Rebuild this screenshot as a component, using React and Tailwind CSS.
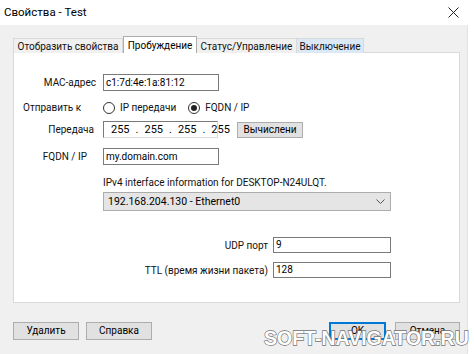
import React from "react";

function Radio({ checked }) {
  return (
    <span className="w-[12px] h-[12px] rounded-full border border-[#333] bg-white flex items-center justify-center shrink-0">
      {checked && <span className="w-[6px] h-[6px] rounded-full bg-[#222]" />}
    </span>
  );
}

function Input({ w, h = "h-[17px]", children }) {
  return (
    <div className={`${w} ${h} border border-[#7a7a7a] bg-white flex items-center pl-[2px] leading-none text-black whitespace-nowrap`}>
      {children}
    </div>
  );
}

export default function App() {
  return (
    <div className="w-[474px] h-[354px] bg-white flex flex-col overflow-hidden relative font-['Roboto',Arial,sans-serif] text-[10px] text-[#111] whitespace-nowrap">
      {/* Title bar */}
      <div className="w-[468px] h-[25px] bg-white flex items-center justify-between pl-[4px] pr-[9px] shrink-0">
        <span className="text-[11.5px] text-black">Свойства - Test</span>
        <svg width="11" height="11" viewBox="0 0 11 11">
          <path d="M0.5 0.5 L10.5 10.5 M10.5 0.5 L0.5 10.5" stroke="#222" strokeWidth="1" />
        </svg>
      </div>

      {/* Body */}
      <div className="w-[468px] flex-1 bg-[#f0f0f0] flex flex-col border-r border-[#e3e3e3]">
        {/* Tabs */}
        <div className="mt-[11px] h-[17px] pl-[13px] flex items-end relative z-10 -mb-px shrink-0">
          <div className="w-[110px] h-[15px] border border-b-0 border-[#d9d9d9] bg-[#f0f0f0] flex items-center justify-center">Отобразить свойства</div>
          <div className="w-[74px] h-[17px] border border-b-0 border-[#adadad] bg-white flex items-center justify-center text-black">Пробуждение</div>
          <div className="w-[100px] h-[15px] border border-b-0 border-l-0 border-[#d9d9d9] bg-[#f0f0f0] flex items-center justify-center">Статус/Управление</div>
          <div className="w-[67px] h-[15px] border border-b-0 border-l-0 border-[#d9d9d9] bg-[#dbe8f5] flex items-center justify-center">Выключение</div>
        </div>

        {/* Panel */}
        <div className="ml-[13px] w-[447px] h-[251px] bg-white border border-[#d9d9d9] flex flex-col shrink-0">
          {/* MAC */}
          <div className="mt-[21px] h-[17px] flex items-center">
            <div className="w-[89px] pr-[7px] text-right">MAC-адрес</div>
            <Input w="w-[116px]">c1:7d:4e:1a:81:12</Input>
          </div>
          {/* Radio row */}
          <div className="mt-[10px] h-[13px] flex items-center">
            <div className="w-[89px] pl-[9px]">Отправить к</div>
            <Radio />
            <span className="ml-[5px]">IP передачи</span>
            <span className="ml-[12px] flex items-center">
              <Radio checked />
              <span className="ml-[5px]">FQDN / IP</span>
            </span>
          </div>
          {/* Передача */}
          <div className="mt-[7px] h-[17px] flex items-center">
            <div className="w-[89px] pr-[9px] text-right">Передача</div>
            <div className="w-[115px] h-[17px] border border-[#7a7a7a] border-b-[#d9d9d9] border-r-[#d9d9d9] bg-white flex items-center pl-[7px] text-[11px] leading-none text-black">
              <span>255</span><span className="mx-[6px]">.</span><span>255</span><span className="mx-[6px]">.</span><span>255</span><span className="mx-[6px]">.</span><span>255</span>
            </div>
            <button className="ml-[19px] w-[66px] h-[16px] bg-[#e1e1e1] border border-[#adadad] leading-none text-black flex items-center justify-center">Вычислени</button>
          </div>
          {/* FQDN */}
          <div className="mt-[10px] h-[17px] flex items-center">
            <div className="w-[89px] pr-[16px] text-right">FQDN / IP</div>
            <Input w="w-[116px]">my.domain.com</Input>
          </div>
          {/* IPv4 info */}
          <div className="mt-[11px] h-[13px] leading-[13px] pl-[89px]">IPv4 interface information for DESKTOP-N24ULQT.</div>
          {/* Dropdown */}
          <div className="mt-[3px] ml-[89px] w-[288px] h-[19px] bg-[#e5e5e5] border border-[#acacac] flex items-center justify-between pl-[4px] pr-[5px]">
            <span className="text-black text-[10.5px]">192.168.204.130 - Ethernet0</span>
            <svg width="9" height="6" viewBox="0 0 9 6">
              <path d="M0.5 0.5 L4.5 4.5 L8.5 0.5" fill="none" stroke="#555" strokeWidth="1" />
            </svg>
          </div>
          {/* UDP */}
          <div className="mt-[26px] h-[16px] flex items-center">
            <div className="w-[259px] pr-[5px] text-right">UDP порт</div>
            <Input w="w-[118px]" h="h-[16px]">9</Input>
          </div>
          {/* TTL */}
          <div className="mt-[9px] h-[16px] flex items-center">
            <div className="w-[259px] pr-[5px] text-right">TTL (время жизни пакета)</div>
            <Input w="w-[118px]" h="h-[16px]">128</Input>
          </div>
        </div>

        {/* Bottom buttons */}
        <div className="mt-[19px] h-[18px] pl-[13px] pr-[7px] flex items-center shrink-0">
          <button className="w-[66px] h-[18px] bg-[#e1e1e1] border border-[#adadad] leading-none text-black flex items-center justify-center">Удалить</button>
          <button className="ml-[7px] w-[66px] h-[18px] bg-[#e1e1e1] border border-[#adadad] leading-none text-black flex items-center justify-center">Справка</button>
          <div className="flex-1" />
          <button className="w-[57px] h-[18px] bg-[#e1e1e1] border-2 border-[#0078d7] leading-none text-black flex items-center justify-center">OK</button>
          <button className="ml-[9px] w-[65px] h-[18px] bg-[#e1e1e1] border border-[#adadad] leading-none text-black flex items-center justify-center">Отмена</button>
        </div>
      </div>

      {/* Watermark */}
      <div className="absolute left-[264px] top-[329px] text-[19.5px] leading-none font-bold text-white font-['Liberation_Sans',Arial,sans-serif] [-webkit-text-stroke:1.3px_#707070] [paint-order:stroke_fill] pointer-events-none whitespace-nowrap">
        SOFT-NAVIGATOR.RU
      </div>
    </div>
  );
}
